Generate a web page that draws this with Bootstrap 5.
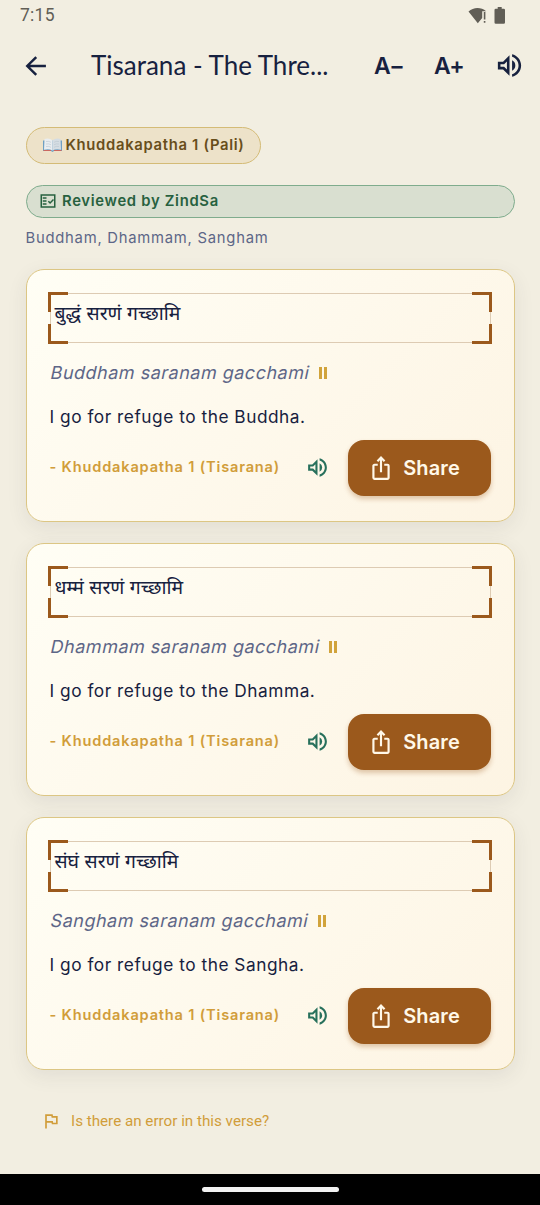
<!DOCTYPE html>
<html lang="en">
<head>
<meta charset="utf-8">
<meta name="viewport" content="width=device-width, initial-scale=1">
<title>Tisarana - The Three Refuges</title>
<link href="https://cdn.jsdelivr.net/npm/bootstrap@5.3.0/dist/css/bootstrap.min.css" rel="stylesheet">
<style>
  :root { --ink:#17213f; --slate:#5d6687; --gold:#d19d3a; --rust:#9b591c; --jade:#27705c; }
  body { width:540px; height:1205px; background:#f2eee1; color:var(--ink); font-family:Inter,"Noto Sans",sans-serif; overflow:hidden; }
  svg { display:block; flex:none; }
  .statusbar { height:30px; padding:0 32px 0 20px; color:#615e56; font:17.5px/30px Roboto,sans-serif; letter-spacing:.25px; }
  .appbar { height:71px; padding:0 15px 0 21.5px; }
  .screen-title { font:26px/36px Lato,sans-serif; margin:-2px 44px 0 41.5px; width:239px; white-space:nowrap; }
  .size-btn { font-weight:600; font-size:23px; line-height:30px; letter-spacing:-.6px; color:var(--ink); }
  .content-area { padding:25.5px 25.5px 0 25.5px; }
  .source-pill { height:37.5px; width:235.4px; padding-left:16px; border:1.5px solid #d4bb76; background:#ede2c9; color:#684e1b; font-weight:600; font-size:14.8px; letter-spacing:.7px; white-space:nowrap; }
  .review-pill { height:33px; margin-top:20.5px; padding-left:12.5px; border:1.5px solid #7fac8d; background:#d9dfd0; color:#27613f; font-weight:600; font-size:14.8px; letter-spacing:.7px; }
  .review-label { margin-left:5px; }
  .subtitle { height:22px; margin:9.5px 0 19.5px; line-height:22px; font-size:14.8px; letter-spacing:.76px; color:var(--slate); white-space:nowrap; }
  .verse { height:253.5px; margin-bottom:20.5px; padding:23.5px 23px 0; border:1.5px solid #dcc684; border-radius:18px; background:linear-gradient(135deg,#fffef5,#fdf4e3); box-shadow:0 6px 20px rgba(60,55,75,.085); }
  .pali-frame { position:relative; height:50px; border:1.3px solid #ddcbb3; padding:6px 0 0 4px; font:19.4px/26px Inter,"Noto Sans Devanagari","Noto Sans",sans-serif; white-space:nowrap; }
  .corner { position:absolute; width:20px; height:20px; border:0 solid var(--rust); }
  .c-tl { left:-3px; top:-2px; border-width:3px 0 0 3px; }
  .c-tr { right:-2px; top:-2px; border-width:3px 3px 0 0; }
  .c-bl { left:-3px; bottom:-2px; border-width:0 0 3px 3px; }
  .c-br { right:-2px; bottom:-2px; border-width:0 3px 3px 0; }
  .translit { height:26px; margin-top:16px; padding-left:1px; font-size:18px; letter-spacing:.5px; color:var(--slate); white-space:nowrap; }
  .slanted { display:inline-block; transform:skewX(-12deg); }
  .danda { width:8px; height:12px; margin-left:10px; margin-top:2px; border:solid #d1a33b; border-width:0 3px; }
  .meaning { height:26px; margin-top:19px; line-height:26px; font-size:17.3px; letter-spacing:.52px; white-space:nowrap; }
  .verse-foot { height:56px; margin-top:9.5px; }
  .cite { width:255.5px; color:var(--gold); font-size:14.6px; font-weight:600; letter-spacing:.82px; white-space:nowrap; }
  .share-btn { width:143px; height:56px; margin-left:18px; padding-left:20px; border-radius:16px; color:#fff8e9; background:#9b591c; font-size:20px; font-weight:600; box-shadow:0 3px 5px rgba(155,89,28,.32); }
  .share-label { margin-left:9.5px; letter-spacing:.15px; }
  .report { height:30px; margin:35.5px 0 0 15px; color:var(--gold); font:15.2px/30px Roboto,sans-serif; white-space:nowrap; }
  .report-label { margin-left:10.5px; }
  .navpill { width:137px; height:5px; border-radius:3px; background:#f2f2f2; }
  .gesture { height:31px; background:#000; }
</style>
</head>
<body class="d-flex flex-column">
<svg width="0" height="0" class="position-absolute">
  <symbol id="speaker" viewBox="0 0 24 24"><path fill="currentColor" d="M3 9v6h4l5 5V4L7 9H3zm7-.17v6.34L7.83 13H5v-2h2.83L10 8.83zM16.5 12A4.5 4.5 0 0 0 14 7.97v8.05A4.47 4.47 0 0 0 16.500 12zM14 3.230v2.060c2.890.86 5 3.540 5 6.710s-2.110 5.850-5 6.710v2.060c4.010-.91 7-4.490 7-8.770s-2.990-7.860-7-8.770z"/></symbol>
  <symbol id="share" viewBox="0 0 24 24"><path fill="currentColor" d="M16 5l-1.420 1.420-1.590-1.590V16h-1.980V4.830L9.420 6.420 8 5l4-4 4 4zm4 5v11c0 1.100-.9 2-2 2H6a2 2 0 0 1-2-2V10c0-1.110.89-2 2-2h3v2H6v11h12V10h-3V8h3a2 2 0 0 1 2 2z"/></symbol>
</svg>

<div class="statusbar d-flex justify-content-between align-items-center">
  <span>7:15</span>
  <span class="d-flex align-items-center">
    <svg width="20" height="17" viewBox="0 0 20 17"><path fill="#615e56" d="M.5 4.500C5.500-.2 13-.2 18.200 4.200H14.200V11L9.800 16.200z"/><path fill="#615e56" d="M15.800 5h1.600v7.500h-1.600zM15.800 14h1.600v1.800h-1.600z"/></svg>
    <svg class="ms-1" width="16" height="17" viewBox="0 0 16 17"><path fill="#615e56" d="M5.700 0h4v1.700h2Q13 1.700 13 3v12.500q0 1.300-1.300 1.300H3.800q-1.300 0-1.300-1.300V3q0-1.300 1.300-1.300h1.900z"/></svg>
  </span>
</div>

<header class="appbar d-flex align-items-center">
  <svg width="28" height="28" viewBox="0 0 24 24"><path fill="none" stroke="#17213f" stroke-width="2.100" d="M20.500 12H4.500M12.200 4.300 4.500 12l7.700 7.700"/></svg>
  <h1 class="screen-title">Tisarana - The Thre...</h1>
  <span class="size-btn">A−</span>
  <span class="size-btn ms-auto">A+</span>
  <svg class="ms-auto" width="31" height="31"><use href="#speaker"/></svg>
</header>

<main class="content-area flex-grow-1">
  <div class="source-pill rounded-pill d-flex align-items-center">
    <svg width="19" height="14" viewBox="0 0 19 14"><path fill="#6f9fc2" d="M0 2.500h19v10.500h-8l-1.500 1L8 13H0z"/><path fill="#e9edf0" d="M1.500 1Q6-.4 9.500 2.300V12.500Q6 10.300 1 11.700z"/><path fill="#d5dde3" d="M17.500 1Q13-.4 9.500 2.300V12.500q3.500-2.200 8.500-.8z"/><path stroke="#b9c5ce" stroke-width=".6" fill="none" d="M3 3.500q3-.6 5 .8M3 6q3-.6 5 .8M3 8.500q3-.6 5 .8M11 4.300q2-1.400 5-.8M11 6.800q2-1.400 5-.8M11 9.300q2-1.400 5-.8"/><path stroke="#cb6860" d="M.5 12.500h7.500M11 12.500h7.500"/></svg>
    <span class="ms-1">Khuddakapatha 1 (Pali)</span>
  </div>
  <div class="review-pill rounded-pill d-flex align-items-center">
    <svg width="18" height="18" viewBox="0 0 24 24"><path fill="none" stroke="currentColor" stroke-width="2" d="M3 4h18v16H3zM5 8h5M5 12h5M5 16h5M12.500 12.300l2.300 2.300 4.500-4.500"/></svg>
    <span class="review-label">Reviewed by ZindSa</span>
  </div>
  <div class="subtitle">Buddham, Dhammam, Sangham</div>

  <article class="verse">
    <div class="pali-frame" lang="pi">बुद्धं सरणं गच्छामि<i class="corner c-tl"></i><i class="corner c-tr"></i><i class="corner c-bl"></i><i class="corner c-br"></i></div>
    <div class="translit d-flex align-items-center"><span class="slanted">Buddham saranam gacchami</span><span class="danda"></span></div>
    <div class="meaning">I go for refuge to the Buddha.</div>
    <div class="verse-foot d-flex align-items-center">
      <span class="cite">- Khuddakapatha 1 (Tisarana)</span>
      <svg width="25" height="25" color="#27705c"><use href="#speaker"/></svg>
      <div class="share-btn d-flex align-items-center"><svg width="26" height="26"><use href="#share"/></svg><span class="share-label">Share</span></div>
    </div>
  </article>

  <article class="verse">
    <div class="pali-frame" lang="pi">धम्मं सरणं गच्छामि<i class="corner c-tl"></i><i class="corner c-tr"></i><i class="corner c-bl"></i><i class="corner c-br"></i></div>
    <div class="translit d-flex align-items-center"><span class="slanted">Dhammam saranam gacchami</span><span class="danda"></span></div>
    <div class="meaning">I go for refuge to the Dhamma.</div>
    <div class="verse-foot d-flex align-items-center">
      <span class="cite">- Khuddakapatha 1 (Tisarana)</span>
      <svg width="25" height="25" color="#27705c"><use href="#speaker"/></svg>
      <div class="share-btn d-flex align-items-center"><svg width="26" height="26"><use href="#share"/></svg><span class="share-label">Share</span></div>
    </div>
  </article>

  <article class="verse">
    <div class="pali-frame" lang="pi">संघं सरणं गच्छामि<i class="corner c-tl"></i><i class="corner c-tr"></i><i class="corner c-bl"></i><i class="corner c-br"></i></div>
    <div class="translit d-flex align-items-center"><span class="slanted">Sangham saranam gacchami</span><span class="danda"></span></div>
    <div class="meaning">I go for refuge to the Sangha.</div>
    <div class="verse-foot d-flex align-items-center">
      <span class="cite">- Khuddakapatha 1 (Tisarana)</span>
      <svg width="25" height="25" color="#27705c"><use href="#speaker"/></svg>
      <div class="share-btn d-flex align-items-center"><svg width="26" height="26"><use href="#share"/></svg><span class="share-label">Share</span></div>
    </div>
  </article>

  <div class="report d-flex align-items-center">
    <svg width="20" height="20" viewBox="0 0 24 24"><path fill="currentColor" d="M12.360 6l.4 2H18v6h-3.360l-.4-2H7V6h5.360M14 4H5v17h2v-7h5.600l.4 2h7V6h-5.600L14 4z"/></svg>
    <span class="report-label">Is there an error in this verse?</span>
  </div>
</main>

<footer class="gesture d-flex justify-content-center align-items-center"><div class="navpill"></div></footer>
<script src="https://cdn.jsdelivr.net/npm/bootstrap@5.3.0/dist/js/bootstrap.bundle.min.js"></script>
</body>
</html>
